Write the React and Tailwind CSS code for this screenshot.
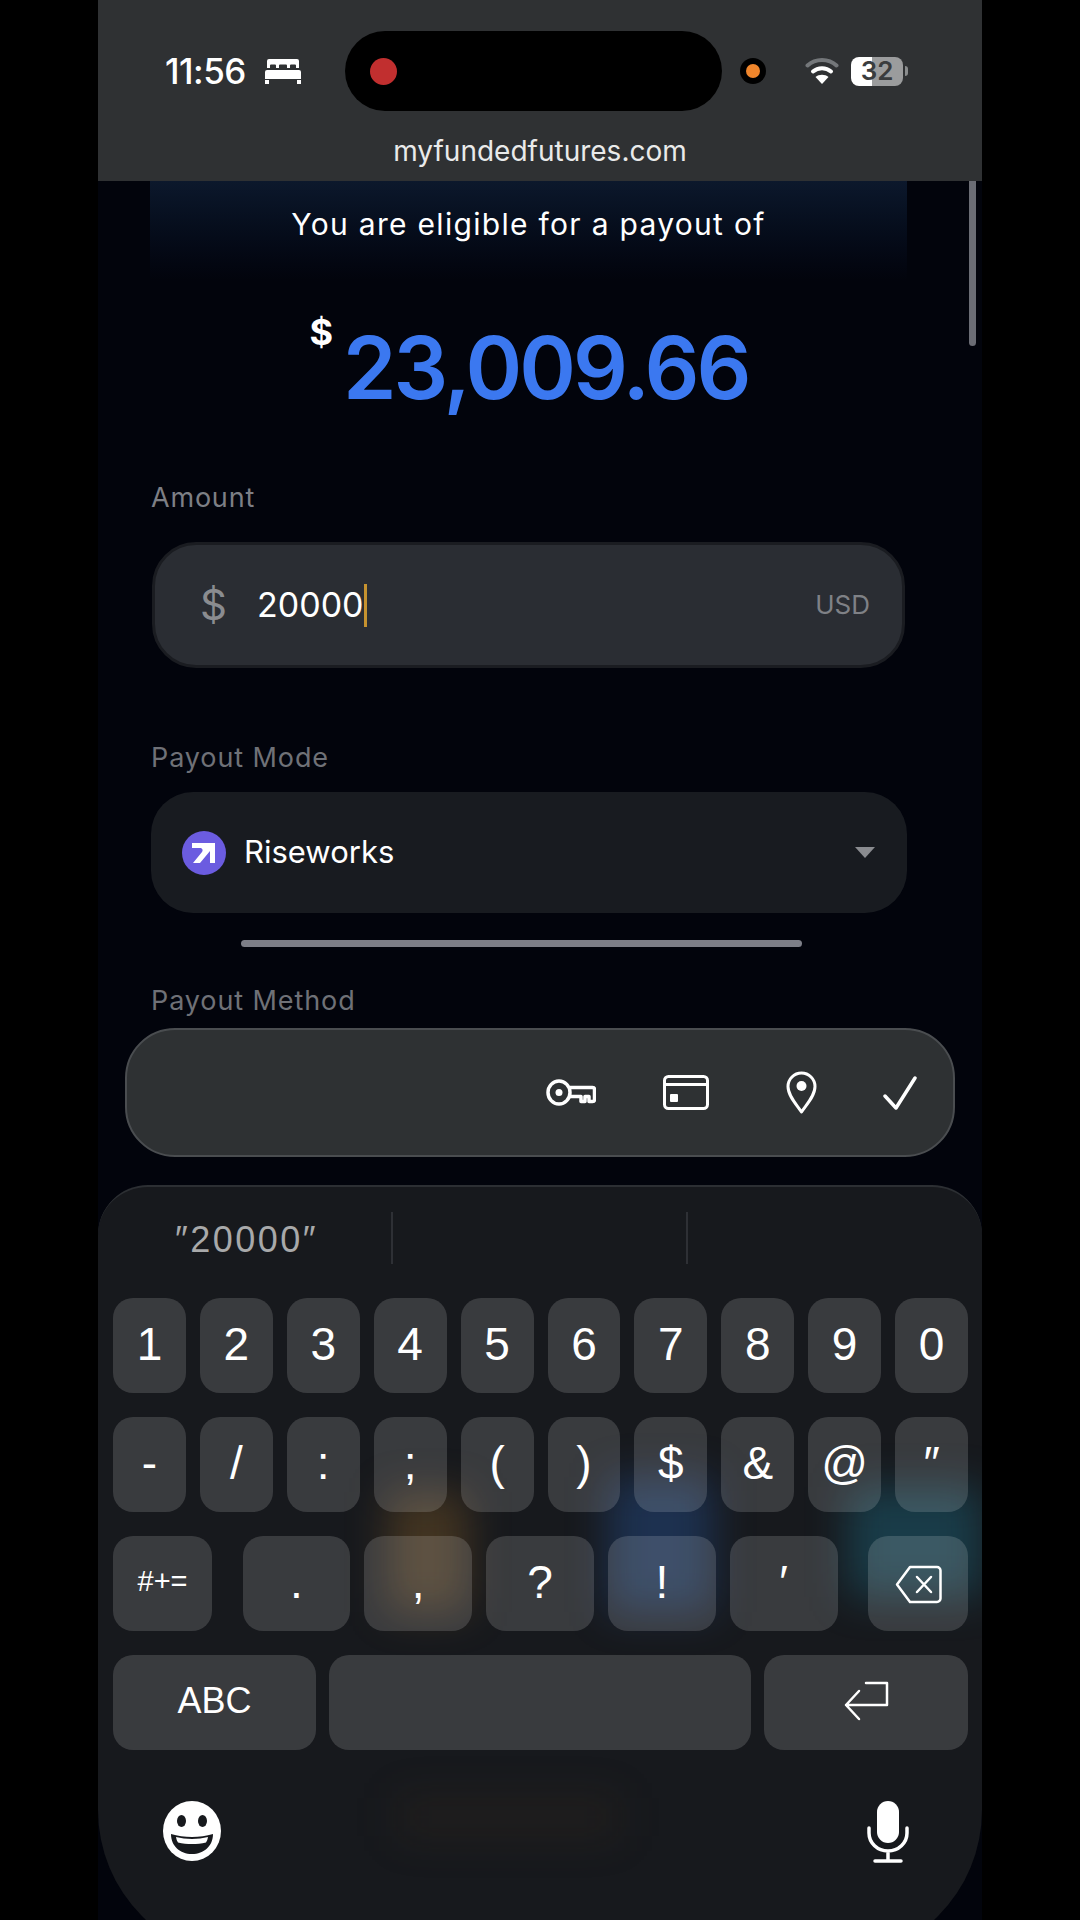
import React from 'react'

const row1 = ['1', '2', '3', '4', '5', '6', '7', '8', '9', '0']
const row2 = ['-', '/', ':', ';', '(', ')', '$', '&', '@', '″']
const row3 = ['.', ',', '?', '!', '′']

function Key({ children, className = '' }) {
  return (
    <div className={`h-[95px] pb-[4px] rounded-[20px] bg-white/[0.15] flex items-center justify-center text-white text-[46px] leading-none ${className}`}>
      {children}
    </div>
  )
}

function Bed() {
  return (
    <svg width="36" height="25" viewBox="0 0 36 25" fill="#fff">
      <path d="M4 0h28a2 2 0 0 1 2 2v7h-3V6.500a1 1 0 0 0-1-1h-4a1 1 0 0 0-1 1V9h-3V6.500a1 1 0 0 0-1-1h-6a1 1 0 0 0-1 1V9h-3V6.500a1 1 0 0 0-1-1H6a1 1 0 0 0-1 1V9H2V2a2 2 0 0 1 2-2z" />
      <path d="M2 11h32a2 2 0 0 1 2 2v7H0v-7a2 2 0 0 1 2-2zM0 21h4v4H0zM32 21h4v4h-4z" />
    </svg>
  )
}

function Wifi() {
  return (
    <svg width="34" height="28" viewBox="0 0 34 28" fill="none" strokeLinecap="round">
      <path d="M2.500 8.500C10.500 1 23.500 1 31.500 8.500" stroke="#74777a" strokeWidth="4" />
      <path d="M8 14.500C13 10 21 10 26 14.500" stroke="#fff" strokeWidth="4" />
      <path d="M17 27l-6.500-7c3.500-3 9.500-3 13 0z" fill="#fff" />
    </svg>
  )
}

function Battery() {
  return (
    <div className="flex items-center gap-[2px]">
      <div className="relative w-[52px] h-[29px] rounded-[8px] overflow-hidden flex">
        <div className="w-[21px] bg-white" />
        <div className="flex-1 bg-[#9b9c9d]" />
        <span className="absolute inset-0 flex items-center justify-center text-[#3a3c3e] text-[26px] font-semibold leading-none">32</span>
      </div>
      <div className="w-[3px] h-[10px] rounded-r-[3px] bg-[#8b8d8e]" />
    </div>
  )
}

function RiseLogo() {
  return (
    <svg width="44" height="44" viewBox="0 0 44 44" className="shrink-0">
      <circle cx="22" cy="22" r="22" fill="#6b5ce0" />
      <path d="M10 12h23v20h-5V20L18 32h-7l9-11c1.500-2 0-4-2-4h-8z" fill="#fff" />
    </svg>
  )
}

function KeyIcon() {
  return (
    <svg width="50" height="27" viewBox="0 0 50 27" fill="none" stroke="#fff" strokeWidth="3.500" strokeLinejoin="round">
      <ellipse cx="13" cy="13.500" rx="11" ry="11.500" />
      <circle cx="13" cy="13.500" r="3.500" fill="#fff" stroke="none" />
      <path d="M24 8.500h22.500a2 2 0 0 1 2 2v10a2 2 0 0 1-2 2h-3.500v-5h-4v5h-4v-5h-11" />
    </svg>
  )
}

function CardIcon() {
  return (
    <svg width="46" height="35" viewBox="0 0 46 35" fill="none" stroke="#fff" strokeWidth="3">
      <rect x="1.500" y="1.500" width="43" height="32" rx="4" />
      <path d="M1.500 9.500h43" />
      <rect x="7" y="19" width="8" height="8" rx="1" fill="#fff" stroke="none" />
    </svg>
  )
}

function PinIcon() {
  return (
    <svg width="31" height="44" viewBox="0 0 31 44" fill="none" stroke="#fff" strokeWidth="3" strokeLinejoin="round">
      <path d="M15.500 41C11 34 2 25 2 15.500a13.500 13.500 0 0 1 27 0C29 25 20 34 15.500 41z" />
      <circle cx="15.500" cy="15" r="5" fill="#fff" stroke="none" />
    </svg>
  )
}

function CheckIcon() {
  return (
    <svg width="34" height="34" viewBox="0 0 34 34" fill="none" stroke="#fff" strokeWidth="3.500" strokeLinecap="round" strokeLinejoin="round">
      <path d="M2 20l11 12L32 2" />
    </svg>
  )
}

function Backspace() {
  return (
    <svg width="47" height="39" viewBox="0 0 47 39" fill="none" stroke="#fff" strokeWidth="2.500" strokeLinejoin="round" strokeLinecap="round" className="mt-[6px]">
      <path d="M15 2h27a3.500 3.500 0 0 1 3.500 3.500v28A3.500 3.500 0 0 1 42 37H15L2 19.500z" />
      <path d="M22 12l14 15M36 12L22 27" />
    </svg>
  )
}

function ReturnIcon() {
  return (
    <svg width="45" height="40" viewBox="0 0 45 40" fill="none" stroke="#fff" strokeWidth="2.500" strokeLinecap="round" strokeLinejoin="round">
      <path d="M22 2h21v22H2M15 10L2 24l13 14" />
    </svg>
  )
}

function Emoji() {
  return (
    <svg width="60" height="60" viewBox="0 0 60 60">
      <ellipse cx="30" cy="30" rx="29" ry="30" fill="#fff" />
      <ellipse cx="19.500" cy="20" rx="4.500" ry="6" fill="#17191d" />
      <ellipse cx="40.500" cy="20" rx="4.500" ry="6" fill="#17191d" />
      <path d="M9 33c13 4 29 4 42 0 0 12-9 20-21 20S9 45 9 33z" fill="#17191d" />
      <path d="M14 36c10 2.500 22 2.500 32 0-.5 2.500-1 4-2 5.500-9 2-19 2-28 0-1-1.500-1.500-3-2-5.500z" fill="#fff" />
    </svg>
  )
}

function Mic() {
  return (
    <svg width="42" height="62" viewBox="0 0 42 62" fill="none">
      <rect x="10" y="0" width="22" height="42" rx="11" fill="#fff" />
      <path d="M2 27v5c0 10 8.500 18 19 18s19-8 19-18v-5M21 50v9M8 60h26" stroke="#fff" strokeWidth="3.500" strokeLinecap="round" />
    </svg>
  )
}

export default function App() {
  return (
    <div className="w-[1080px] h-[1920px] overflow-hidden bg-black flex justify-center font-['Inter',sans-serif]">
      <div className="relative w-[884px] h-[1920px] bg-[#02040c] flex flex-col">
        {/* status + url bar */}
        <div className="h-[181px] shrink-0 bg-[#2f3133] relative">
          <div className="flex items-center pt-[31px] h-[111px]">
            <span className="ml-[67px] w-[86px] text-white text-[35px] font-medium leading-none whitespace-nowrap tracking-[-0.5px]">11:56</span>
            <div className="ml-[14px]"><Bed /></div>
            <div className="ml-[44px] w-[377px] h-[80px] rounded-[40px] bg-black flex items-center pl-[25px]">
              <div className="w-[27px] h-[27px] rounded-full bg-[#c12f2f]" />
            </div>
            <div className="ml-[18px] w-[26px] h-[26px] rounded-full bg-black flex items-center justify-center">
              <div className="w-[14px] h-[14px] rounded-full bg-[#f0862c]" />
            </div>
            <div className="ml-[39px]"><Wifi /></div>
            <div className="ml-[12px]"><Battery /></div>
          </div>
          <div className="mt-[22px] text-center text-[#e9eaea] text-[28px] leading-[36px]">myfundedfutures.com</div>
        </div>

        {/* page scrollbar */}
        <div className="absolute left-[871px] top-[181px] w-[7px] h-[165px] rounded-b-[4px] bg-[#6b6d75]" />

        {/* eligible panel */}
        <div className="ml-[52px] w-[757px] h-[100px] shrink-0 pt-[25px] bg-gradient-to-b from-[#0c182c] to-[#02040c] text-center text-white text-[30px] tracking-[1.3px] leading-[36px]">
          You are eligible for a payout of
        </div>

        <div className="h-[202px] shrink-0 flex justify-center ml-[-22px] items-start gap-[10px]">
          <span className="mt-[33px] text-white text-[36px] font-bold leading-[36px]">$</span>
          <span className="mt-[44px] text-[#3b78f0] text-[86px] font-semibold leading-[86px] tracking-[-3px]">23,009.66</span>
        </div>

        <div className="ml-[53px] h-[30px] shrink-0 text-[#7d7f85] text-[27px] tracking-[0.8px] leading-[30px]">Amount</div>
        <div className="mt-[29px] ml-[54px] w-[753px] h-[126px] shrink-0 rounded-[44px] bg-[#2a2d33] border-[3px] border-[#1a1c21] flex items-center relative">
          <span className="ml-[45px] w-[57px] text-[#8a8c90] text-[42px] leading-none">$</span>
          <span className="text-white text-[34px] leading-none">20000</span>
          <div className="w-[3px] h-[43px] bg-[#c6922f]" />
          <span className="ml-auto mr-[32px] text-[#7f8186] text-[26px] leading-none">USD</span>
        </div>

        <div className="mt-[75px] ml-[53px] h-[30px] shrink-0 text-[#6f7177] text-[27px] tracking-[0.9px] leading-[30px]">Payout Mode</div>
        <div className="mt-[19px] ml-[53px] w-[756px] h-[121px] shrink-0 rounded-[42px] bg-[#181b20] flex items-center pl-[31px] pr-[32px]">
          <RiseLogo />
          <span className="ml-[18px] mb-[2px] text-white text-[31px] leading-none">Riseworks</span>
          <div className="ml-auto w-0 h-0 border-x-[10px] border-x-transparent border-t-[11px] border-t-[#8a8c90]" />
        </div>

        <div className="mt-[27px] ml-[143px] w-[561px] h-[7px] shrink-0 rounded-full bg-[#7d7f88]" />

        <div className="mt-[39px] ml-[53px] h-[30px] shrink-0 text-[#6f7177] text-[27px] tracking-[0.9px] leading-[30px]">Payout Method</div>

        {/* keyboard accessory bar */}
        <div className="mt-[12px] ml-[27px] w-[830px] h-[129px] shrink-0 rounded-[50px] bg-[#2e3133] border-2 border-[#4a4d50] relative flex items-center">
          <div className="ml-[419px]"><KeyIcon /></div>
          <div className="ml-[67px]"><CardIcon /></div>
          <div className="ml-[77px]"><PinIcon /></div>
          <div className="ml-[66px]"><CheckIcon /></div>
        </div>

        {/* keyboard */}
        <div className="mt-[28px] w-[884px] h-[775px] shrink-0 relative overflow-hidden bg-[#17191d] border-t-2 border-[#2c2f33] rounded-t-[50px] rounded-b-[150px] font-['Liberation_Sans',sans-serif]">
          <div className="absolute left-[290px] top-[305px] w-[80px] h-[120px] bg-[#a8752a]/30 blur-[20px]" />
          <div className="absolute left-[510px] top-[290px] w-[105px] h-[135px] bg-[#2a6bc8]/30 blur-[20px]" />
          <div className="absolute left-[750px] top-[300px] w-[134px] h-[110px] bg-[#1f8fb0]/30 blur-[20px]" />
          <div className="absolute left-[300px] top-[610px] w-[220px] h-[40px] bg-[#5a3a1a]/15 blur-[20px]" />

          <div className="relative flex flex-col pl-[15px] pr-[14px]">
            <div className="h-[111px] flex items-center relative">
              <span className="ml-[62px] mb-[6px] text-[#a8a9aa] text-[36px] tracking-[2.5px] leading-none">″20000″</span>
              <div className="absolute left-[278px] top-[25px] w-[2px] h-[52px] bg-[#2e3035]" />
              <div className="absolute left-[573px] top-[25px] w-[2px] h-[52px] bg-[#2e3035]" />
            </div>

            <div className="grid grid-cols-10 gap-[14px]">
              {row1.map((k) => <Key key={k}>{k}</Key>)}
            </div>
            <div className="mt-[24px] grid grid-cols-10 gap-[14px]">
              {row2.map((k) => <Key key={k}>{k}</Key>)}
            </div>
            <div className="mt-[24px] flex justify-between">
              <Key className="w-[99px] !text-[29px]">#+=</Key>
              <div className="w-[595px] grid grid-cols-5 gap-[14px]">
                {row3.map((k) => <Key key={k}>{k}</Key>)}
              </div>
              <Key className="w-[100px]"><Backspace /></Key>
            </div>
            <div className="mt-[24px] flex gap-[13px]">
              <Key className="w-[203px] !text-[36px]">ABC</Key>
              <Key className="flex-1" />
              <Key className="w-[204px]"><ReturnIcon /></Key>
            </div>
            <div className="mt-[51px] flex justify-between pl-[49px] pr-[59px]">
              <Emoji />
              <Mic />
            </div>
          </div>
        </div>
      </div>
    </div>
  )
}
